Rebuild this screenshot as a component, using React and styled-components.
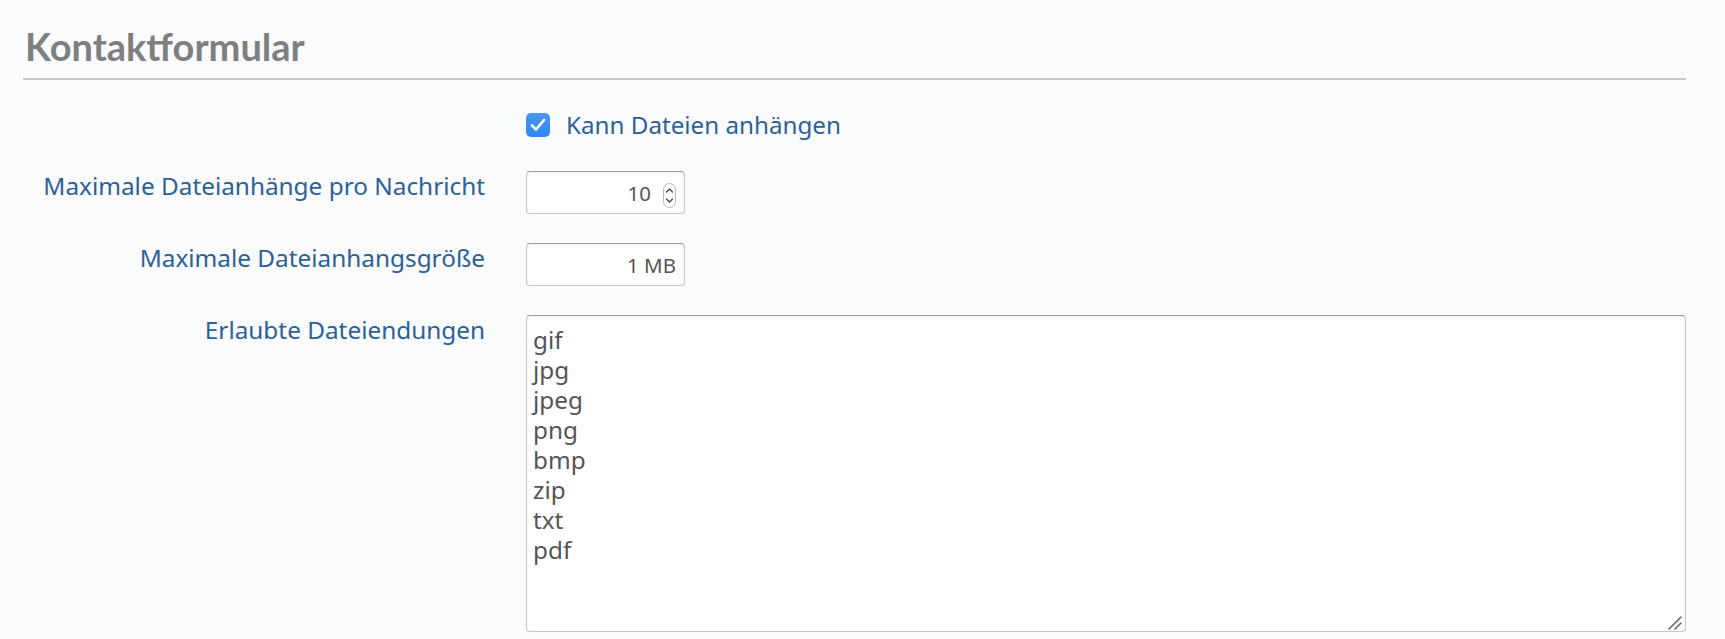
import React from "react";
import styled, { createGlobalStyle } from "styled-components";

const GlobalStyle = createGlobalStyle`
  html, body {
    margin: 0;
    background: #fafbfd;
  }
  * {
    box-sizing: border-box;
  }
`;

const Page = styled.div`
  padding: 0 39px 0 23px;
  font-family: "Noto Sans", sans-serif;
`;

const Title = styled.h2`
  margin: 23px 0 0;
  padding: 0 0 9px 2px;
  font-family: "Lato", sans-serif;
  font-weight: 700;
  font-size: 38px;
  line-height: 46px;
  color: #7f7f7f;
  border-bottom: 2px solid #c8c8c8;
`;

const Form = styled.div`
  display: grid;
  grid-template-columns: 462px 1fr;
  column-gap: 41px;
  row-gap: 29px;
  margin-top: 28px;
  align-items: start;
`;

const Label = styled.label`
  text-align: right;
  font-size: 24.35px;
  line-height: 32px;
  color: #2c6198;
  margin-top: -1px;
`;

const CheckRow = styled.label`
  display: flex;
  align-items: center;
  gap: 16px;
  font-size: 24.2px;
  line-height: 34px;
  color: #2c6198;
`;

const CheckBox = styled.span`
  width: 24px;
  height: 24px;
  border-radius: 5px;
  background: linear-gradient(#4a97f7, #2f86f2);
  display: flex;
  align-items: center;
  justify-content: center;
  flex: none;
`;

const Field = styled.div`
  position: relative;
  width: 159px;
  height: 43px;
`;

const Input = styled.input`
  width: 100%;
  height: 100%;
  border: 1px solid #c6c6c6;
  border-top-color: #9c9c9c;
  border-radius: 4px;
  background: #fff;
  box-shadow: inset 0 1px 3px rgba(0, 0, 0, 0.08);
  padding: 0 ${(p) => p.$padRight}px 0 8px;
  text-align: right;
  font-family: "Noto Sans", sans-serif;
  font-size: 20.5px;
  color: #555;
  outline: none;
`;

const Spinner = styled.span`
  position: absolute;
  right: 9px;
  top: 12px;
  width: 13px;
  height: 25px;
  border: 1px solid #b9b9b9;
  border-radius: 7px;
  background: #fff;
  display: flex;
  align-items: center;
  justify-content: center;
`;

const AreaWrap = styled.div`
  position: relative;
`;

const TextArea = styled.textarea`
  display: block;
  width: 100%;
  height: 317px;
  border: 1px solid #c6c6c6;
  border-top-color: #9c9c9c;
  border-radius: 4px;
  background: #fff;
  box-shadow: inset 0 1px 3px rgba(0, 0, 0, 0.08);
  padding: 9px 6px 7px;
  font-family: "Noto Sans", sans-serif;
  font-size: 24.3px;
  line-height: 30px;
  color: #555;
  resize: none;
  outline: none;
`;

const Grip = styled.svg`
  position: absolute;
  right: 3px;
  bottom: 2px;
`;

const extensions = ["gif", "jpg", "jpeg", "png", "bmp", "zip", "txt", "pdf"];

export default function App() {
  return (
    <Page>
      <GlobalStyle />
      <Title>Kontaktformular</Title>
      <Form>
        <span />
        <CheckRow>
          <CheckBox>
            <svg width="16" height="14" viewBox="0 0 16 14">
              <path
                d="M2 7.5 L6 11.5 L14 2"
                fill="none"
                stroke="#fff"
                strokeWidth="2.6"
                strokeLinecap="round"
                strokeLinejoin="round"
              />
            </svg>
          </CheckBox>
          Kann Dateien anhängen
        </CheckRow>

        <Label>Maximale Dateianhänge pro Nachricht</Label>
        <Field>
          <Input $padRight={33} defaultValue="10" />
          <Spinner>
            <svg width="9" height="19" viewBox="0 0 9 19">
              <path
                d="M1.5 6 L4.5 3 L7.5 6 M1.5 13 L4.5 16 L7.5 13"
                fill="none"
                stroke="#444"
                strokeWidth="1.3"
                strokeLinecap="round"
                strokeLinejoin="round"
              />
            </svg>
          </Spinner>
        </Field>

        <Label>Maximale Dateianhangsgröße</Label>
        <Field>
          <Input $padRight={8} defaultValue="1 MB" />
        </Field>

        <Label>Erlaubte Dateiendungen</Label>
        <AreaWrap>
          <TextArea defaultValue={extensions.join("\n")} />
          <Grip width="16" height="15" viewBox="0 0 16 15">
            <path
              d="M2 14 L14 2 M8 14 L14 8"
              stroke="#666"
              strokeWidth="1.6"
              strokeLinecap="round"
            />
          </Grip>
        </AreaWrap>
      </Form>
    </Page>
  );
}
